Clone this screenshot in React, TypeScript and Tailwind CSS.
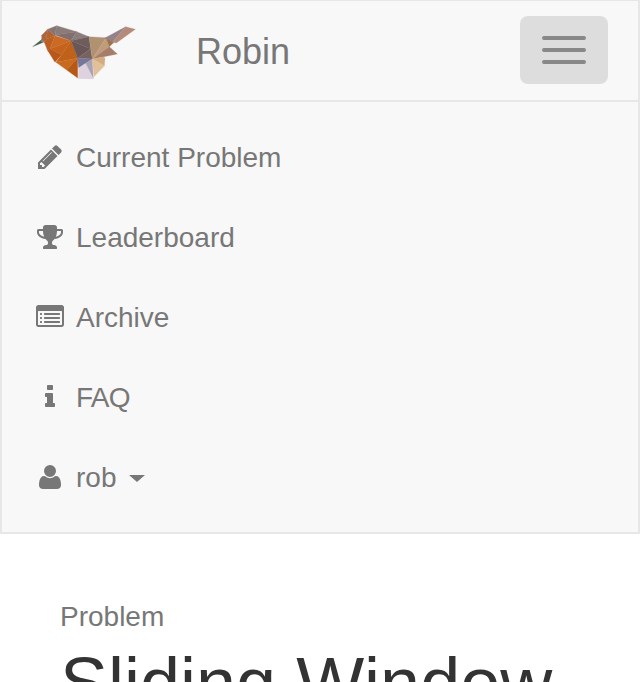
import type { ReactNode } from "react";

const facets: [string, string][] = [
  ["8,80 37,57 40,67", "#44604f"],
  ["37,57 33,64 42,67", "#8d9a9a"],
  ["35,58 35,46 53,28 48,58 43,67", "#a96643"],
  ["53,28 75,47 48,58", "#b4622e"],
  ["43,67 48,58 75,47 60,86 52,90", "#bd5f22"],
  ["53,28 80,17 75,47", "#857675"],
  ["80,17 140,35 75,45", "#8b7c79"],
  ["75,45 140,35 123,62", "#806f6e"],
  ["140,35 177,50 123,62", "#8c7d7d"],
  ["75,47 123,62 60,86", "#cb6a24"],
  ["60,86 123,62 95,104", "#c5631c"],
  ["52,90 60,86 95,104 75,127", "#b9571a"],
  ["123,62 143,115 78,127 95,104", "#bf6118"],
  ["78,127 143,115 110,150", "#c96a20"],
  ["110,150 143,115 143,174", "#b65816"],
  ["123,62 177,50 182,86", "#6f5c5d"],
  ["123,62 182,86 143,115", "#695657"],
  ["143,115 182,86 187,117", "#786260"],
  ["143,115 187,117 146,144", "#77779a"],
  ["146,144 167,130 190,177 145,176", "#ded2df"],
  ["187,117 167,130 190,175", "#aaa3b8"],
  ["177,50 228,53 187,117", "#b09270"],
  ["228,53 238,80 187,117", "#c09c7b"],
  ["228,53 252,67 238,80", "#9d7447"],
  ["238,80 262,102 222,110 187,117", "#a67d6b"],
  ["187,117 222,110 225,116 223,138", "#d3ad80"],
  ["187,117 223,138 192,170", "#e2c19a"],
  ["223,55 287,20 248,66 238,60", "#95818a"],
  ["287,20 316,28 259,69 248,66", "#b48b7b"],
];

function Robin() {
  return (
    <svg width="110" height="62" viewBox="0 0 330 186" className="mt-px block">
      {facets.map(([points, fill], i) => (
        <polygon key={i} points={points} fill={fill} stroke={fill} strokeWidth="0.8" />
      ))}
    </svg>
  );
}

const pencil =
  "M491 1536l91-91-235-235-91 91v107h128v128h107zm523-928q0-22-22-22-10 0-17 7l-542 542q-7 7-7 17 0 22 22 22 10 0 17-7l542-542q7-7 7-17zm-54-192l416 416-832 832h-416v-416zm683 96q0 53-37 90l-166 166-416-416 166-165q36-38 90-38 53 0 91 38l235 234q37 39 37 91z";
const trophy =
  "M522 883q-74-162-74-371h-256v96q0 78 94.5 162t235.5 113zm1078-275v-96h-256q0 209-74 371 141-29 235.5-113t94.5-162zm128-128v128q0 71-41.5 143t-112 130-173 97.5-215.5 44.5q-42 54-95 95-38 34-52.5 72.5t-14.5 89.5q0 54 30.5 91t97.5 37q75 0 133.5 45.5t58.5 114.5v64q0 14-9 23t-23 9h-832q-14 0-23-9t-9-23v-64q0-69 58.5-114.5t133.5-45.5q67 0 97.5-37t30.5-91q0-51-14.5-89.5t-52.5-72.5q-53-41-95-95-113-5-215.5-44.5t-173-97.5-112-130-41.5-143v-128q0-40 28-68t68-28h288v-96q0-66 47-113t113-47h576q66 0 113 47t47 113v96h288q40 0 68 28t28 68z";
const bullet = "v64q0 13-9.5 22.5t-22.5 9.5h-64q-13 0-22.5-9.5t-9.5-22.5v-64q0-13 9.5-22.5t22.5-9.5h64q13 0 22.5 9.5t9.5 22.5z";
const line = "v64q0 13-9.5 22.5t-22.5 9.5h-960q-13 0-22.5-9.5t-9.5-22.5v-64q0-13 9.5-22.5t22.5-9.5h960q13 0 22.5 9.5t9.5 22.5z";
const listAlt = `M384 1184${bullet}M384 928${bullet}M384 672${bullet}M1536 1184${line}M1536 928${line}M1536 672${line}M1664 1376v-832q0-13-9.5-22.5t-22.5-9.5h-1472q-13 0-22.5 9.5t-9.5 22.5v832q0 13 9.5 22.5t22.5 9.5h1472q13 0 22.5-9.5t9.5-22.5zM1792 288v1088q0 66-47 113t-113 47h-1472q-66 0-113-47t-47-113v-1088q0-66 47-113t113-47h1472q66 0 113 47t47 113z`;
const info =
  "M1216 1344v128q0 26-19 45t-45 19h-512q-26 0-45-19t-19-45v-128q0-26 19-45t45-19h64v-384h-64q-26 0-45-19t-19-45v-128q0-26 19-45t45-19h384q26 0 45 19t19 45v576h64q26 0 45 19t19 45zm-128-1152v192q0 26-19 45t-45 19h-256q-26 0-45-19t-19-45v-192q0-26 19-45t45-19h256q26 0 45 19t19 45z";
const user =
  "M1600 1405q0 120-73 189.5t-194 69.5h-874q-121 0-194-69.5t-73-189.5q0-53 3.5-103.5t14-109 26.5-108.5 43-97.5 62-81 85.5-53.5 111.5-20q9 0 42 21.5t74.5 48 108 48 133.5 21.5 133.5-21.5 108-48 74.5-48 42-21.5q61 0 111.5 20t85.5 53.5 62 81 43 97.5 26.5 108.5 14 109 3.5 103.5zm-320-893q0 159-112.5 271.5t-271.5 112.5-271.5-112.5-112.5-271.5 112.5-271.5 271.5-112.5 271.5 112.5 112.5 271.5z";

function NavItem({ icon, children }: { icon: string; children: ReactNode }) {
  return (
    <li className="flex h-20 items-center pl-[34px]">
      <svg width="28" height="28" viewBox="0 0 1792 1792" fill="#777777" fillRule="evenodd" className="-mt-0.5">
        <path d={icon} />
      </svg>
      <span className="ml-3 flex items-center text-[28px] leading-10 whitespace-nowrap">{children}</span>
    </li>
  );
}

export default function App() {
  return (
    <div className="h-[682px] w-[640px] overflow-hidden bg-white font-['Liberation_Sans',Arial,sans-serif] text-[#777777]">
      <nav className="h-[534px] border-2 border-t border-[#e7e7e7] bg-[#f8f8f8]">
        <div className="flex h-[101px] items-center border-b-2 border-[#e7e7e7] pr-[30px] pl-[28px]">
          <Robin />
          <span className="mt-0.5 ml-[56px] text-[36px] leading-10">Robin</span>
          <button className="mb-px ml-auto flex h-[68px] w-[88px] flex-col items-center justify-center gap-2 rounded-lg bg-[#dddddd]">
            <span className="h-1 w-11 rounded-[2px] bg-[#888888]" />
            <span className="h-1 w-11 rounded-[2px] bg-[#888888]" />
            <span className="h-1 w-11 rounded-[2px] bg-[#888888]" />
          </button>
        </div>
        <ul className="pt-4">
          <NavItem icon={pencil}>Current Problem</NavItem>
          <NavItem icon={trophy}>Leaderboard</NavItem>
          <NavItem icon={listAlt}>Archive</NavItem>
          <NavItem icon={info}>
            <span className="tracking-[-0.7px]">FAQ</span>
          </NavItem>
          <NavItem icon={user}>
            rob
            <span className="mt-px ml-[13px] border-x-8 border-t-[7px] border-x-transparent border-t-[#777777]" />
          </NavItem>
        </ul>
      </nav>
      <main className="px-[60px] pt-[63px]">
        <p className="text-[28px] leading-10">Problem</p>
        <h1 className="mt-1.5 text-[72px] leading-[80px] whitespace-nowrap text-[#333333]">Sliding Window</h1>
      </main>
    </div>
  );
}
